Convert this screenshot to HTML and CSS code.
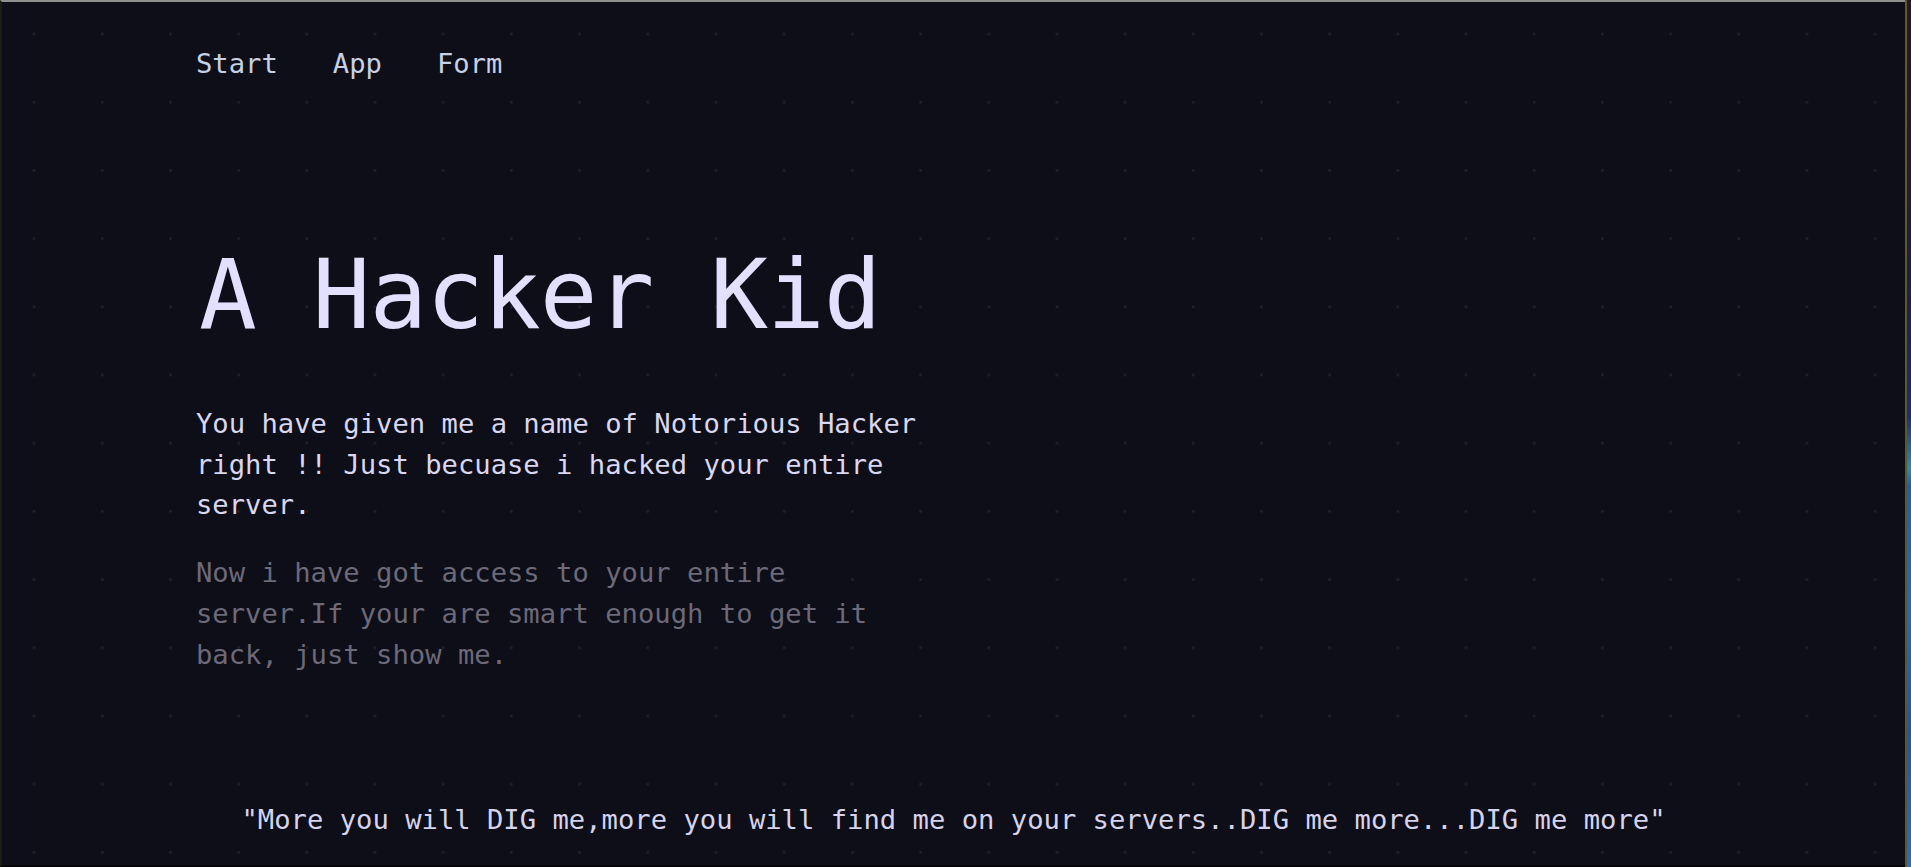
FILE: index.html
```html
<!DOCTYPE html>
<html lang="en">
<head>
<meta charset="utf-8">
<title>A Hacker Kid</title>
<link rel="stylesheet" href="styles.css">
</head>
<body>
  <div class="page">
    <nav class="nav">
      <a class="nav-link" href="#">Start</a>
      <a class="nav-link" href="#">App</a>
      <a class="nav-link" href="#">Form</a>
    </nav>
    <main class="hero">
      <h1 class="title">A Hacker Kid</h1>
      <p class="lead">You have given me a name of Notorious Hacker right !! Just becuase i hacked your entire server.</p>
      <p class="muted">Now i have got access to your entire server.If your are smart enough to get it back, just show me.</p>
    </main>
    <footer class="quote">"More you will DIG me,more you will find me on your servers..DIG me more...DIG me more"</footer>
  </div>
  <div class="edge"></div>
</body>
</html>
```
FILE: styles.css
```css
* { box-sizing: border-box; }

html, body {
  margin: 0;
  padding: 0;
  height: 100%;
}

body {
  display: flex;
  overflow: hidden;
  background: #0d0e17;
  font-family: "DejaVu Sans Mono", "Liberation Mono", monospace;
  font-size: 27.2px;
  line-height: 40.8px;
}

.page {
  flex: 1;
  min-height: 100vh;
  border-top: 2px solid #8f8f8f;
  border-left: 2px solid #1d1c10;
  border-bottom: 2px solid #050508;
  background-color: #0d0e17;
  background-image: radial-gradient(circle at center, #21222d 0, #1b1c27 1.2px, rgba(13, 14, 23, 0) 1.9px);
  background-size: 68.2px 68.2px;
  background-origin: border-box;
  background-position: 0 0;
}

.nav {
  display: flex;
  gap: 55px;
  padding: 42px 0 0 194px;
}

.nav-link {
  color: #c6d1e4;
  text-decoration: none;
}

.hero {
  padding: 162px 0 0 194px;
}

.title {
  margin: 0;
  padding-left: 3px;
  font-size: 96px;
  line-height: 96px;
  letter-spacing: -1px;
  font-weight: normal;
  color: #e2dfff;
}

.lead {
  margin: 61px 0 0;
  max-width: 45ch;
  color: #dad7f1;
}

.muted {
  margin: 27.3px 0 0;
  max-width: 45ch;
  color: #6c6979;
}

.quote {
  margin-top: 124.3px;
  text-align: center;
  color: #d6d3ec;
}

.edge {
  width: 6px;
  flex: none;
  border-left: 2px solid #5f5a1e;
  background: linear-gradient(to bottom,
    #2b1333 0%, #2a1538 18%, #1a1f5a 35%, #1b2a8a 48%, #2a8ab8 54%,
    #1a5fbf 56%, #2466d0 70%, #1d55b8 85%, #2a6ad6 100%);
}
```
